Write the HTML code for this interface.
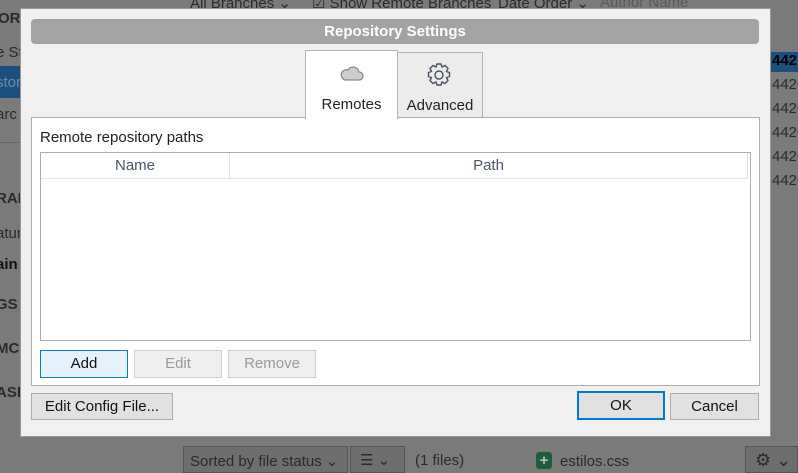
<!DOCTYPE html>
<html><head><style>
*{box-sizing:border-box;margin:0;padding:0}
body{width:798px;height:473px;overflow:hidden;background:#7a7a7a;font-family:"Liberation Sans",sans-serif;font-size:15px;position:relative;color:#1a1a1a}
.a{position:absolute}
.bg{color:#2a2a2a;font-size:15px}
.btn{position:absolute;border:1px solid #adadad;background:#e1e1e1;text-align:center;font-size:15px;line-height:25px;color:#111}
</style></head><body>
<div class="a" style="left:0;top:0;width:20px;height:473px;background:#7a7a7a"></div>
<div class="a bg" style="left:-2px;top:10px;font-weight:bold">OR</div>
<div class="a bg" style="left:-4px;top:44px">e St</div>
<div class="a" style="left:0;top:66px;width:20px;height:32px;background:#1c4f7e"></div>
<div class="a" style="left:-4px;top:74px;color:#6a8aa8">stor</div>
<div class="a bg" style="left:-4px;top:106px">arc</div>
<div class="a" style="left:0;top:142px;width:20px;height:1px;background:#666"></div>
<div class="a bg" style="left:-4px;top:190px;font-weight:bold">RAN</div>
<div class="a bg" style="left:-4px;top:225px">atur</div>
<div class="a" style="left:-4px;top:256px;color:#111;font-weight:bold">ain</div>
<div class="a bg" style="left:-4px;top:296px;font-weight:bold">GS</div>
<div class="a bg" style="left:-4px;top:340px;font-weight:bold">MC</div>
<div class="a bg" style="left:-4px;top:384px;font-weight:bold">ASI</div>
<div class="a bg" style="left:190px;top:-6px">All Branches ⌄</div>
<div class="a bg" style="left:312px;top:-6px">☑ Show Remote Branches</div>
<div class="a bg" style="left:498px;top:-6px">Date Order ⌄</div>
<div class="a" style="left:600px;top:-6px;color:#5a5a5a">Author Name</div>
<div class="a" style="left:770px;top:52px;width:28px;height:20px;background:#1c4f7e"></div>
<div class="a" style="left:772px;top:52px;color:#000;font-weight:bold">442</div>
<div class="a bg" style="left:772px;top:76px">4420</div>
<div class="a bg" style="left:772px;top:100px">4420</div>
<div class="a bg" style="left:772px;top:124px">4420</div>
<div class="a bg" style="left:772px;top:148px">4420</div>
<div class="a bg" style="left:772px;top:172px">4420</div>
<div class="a" style="left:183px;top:446px;width:165px;height:27px;border:1px solid #555;background:#6e6e6e"></div>
<div class="a bg" style="left:190px;top:452px">Sorted by file status ⌄</div>
<div class="a" style="left:350px;top:446px;width:55px;height:27px;border:1px solid #555;background:#6e6e6e"></div>
<div class="a bg" style="left:360px;top:451px">☰ ⌄</div>
<div class="a bg" style="left:415px;top:452px">(1 files)</div>
<div class="a" style="left:536px;top:452px;width:16px;height:17px;background:#1f5c3a;border-radius:3px;color:#bbb;text-align:center;font-weight:bold;line-height:17px">+</div>
<div class="a bg" style="left:560px;top:453px">estilos.css</div>
<div class="a" style="left:745px;top:446px;width:53px;height:27px;border:1px solid #555;background:#6e6e6e"></div>
<div class="a bg" style="left:755px;top:450px;font-size:18px">⚙ ⌄</div>

<div class="a" style="left:20px;top:8px;width:751px;height:429px;background:#f0f0f0;border:1px solid #999"></div>
<div class="a" style="left:31px;top:19px;width:728px;height:25px;background:#a3a3a3;border-radius:4px;color:#fff;font-weight:bold;text-align:center;line-height:25px;font-size:15px">Repository Settings</div>
<div class="a" style="left:397px;top:52px;width:86px;height:66px;border:1px solid #b5b5b5;background:#ececec"></div>
<div class="a" style="left:305px;top:50px;width:93px;height:69px;border:1px solid #b5b5b5;border-bottom:none;background:#fff;z-index:2"></div>
<svg class="a" style="left:340px;top:64px;z-index:3" width="24" height="18" viewBox="0 0 24 18"><path d="M5 16 H19 a4 4 0 0 0 0-8 a6 6 0 0 0-11-2 a5 5 0 0 0-3 10z" fill="#ccc" stroke="#888" stroke-width="1.2"/></svg>
<div class="a" style="left:305px;top:96px;width:93px;text-align:center;color:#222;z-index:3">Remotes</div>
<svg class="a" style="left:426px;top:62px" width="26" height="26" viewBox="0 0 26 26"><g fill="none" stroke="#4a5060" stroke-width="1.4"><circle cx="13" cy="13" r="4"/><path d="M11 2h4l1 3 3-1.5 3 3-1.5 3 3 1v4l-3 1 1.5 3-3 3-3-1.5-1 3h-4l-1-3-3 1.5-3-3 1.5-3-3-1v-4l3-1-1.5-3 3-3 3 1.5z"/></g></svg>
<div class="a" style="left:397px;top:97px;width:86px;text-align:center;color:#222">Advanced</div>
<div class="a" style="left:31px;top:117px;width:729px;height:269px;background:#fff;border:1px solid #adadad"></div>
<div class="a" style="left:40px;top:129px;color:#222">Remote repository paths</div>
<div class="a" style="left:40px;top:152px;width:711px;height:189px;border:1px solid #acacac;background:#fff"></div>
<div class="a" style="left:41px;top:178px;width:707px;height:1px;background:#e3e3e3"></div>
<div class="a" style="left:229px;top:153px;width:1px;height:25px;background:#e3e3e3"></div>
<div class="a" style="left:747px;top:153px;width:1px;height:25px;background:#e3e3e3"></div>
<div class="a" style="left:41px;top:157px;width:188px;text-align:center;color:#4a5568">Name</div>
<div class="a" style="left:230px;top:157px;width:517px;text-align:center;color:#4a5568">Path</div>
<div class="btn" style="left:40px;top:350px;width:88px;height:28px;background:#e5f1fb;border-color:#0078d7">Add</div>
<div class="btn" style="left:134px;top:350px;width:88px;height:28px;background:#efefef;border-color:#d0d0d0;color:#9a9a9a">Edit</div>
<div class="btn" style="left:228px;top:350px;width:88px;height:28px;background:#efefef;border-color:#d0d0d0;color:#9a9a9a">Remove</div>
<div class="btn" style="left:31px;top:393px;width:142px;height:27px">Edit Config File...</div>
<div class="btn" style="left:577px;top:391px;width:88px;height:29px;border:2px solid #0078d7">OK</div>
<div class="btn" style="left:670px;top:393px;width:89px;height:27px">Cancel</div>
</body></html>
